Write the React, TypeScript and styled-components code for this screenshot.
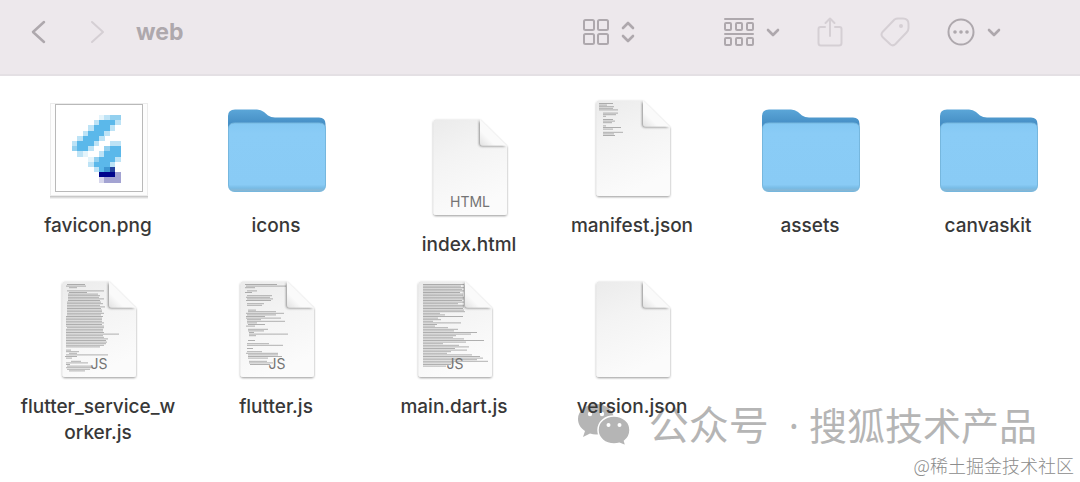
import React from "react";
import styled, { createGlobalStyle } from "styled-components";

const GlobalStyle = createGlobalStyle`
  *, *::before, *::after { box-sizing: border-box; }
  body {
    margin: 0;
    background: #ffffff;
    font-family: Inter, "Noto Sans CJK SC", sans-serif;
  }
`;

const Window = styled.div`
  position: relative;
  min-height: 100vh;
`;

const Toolbar = styled.header`
  display: flex;
  align-items: center;
  justify-content: space-between;
  height: 76px;
  padding: 0 79px 10px 30px;
  background: #ede8ec;
  border-bottom: 2px solid #e4e0e4;
`;

const Navigation = styled.nav`
  display: flex;
  align-items: center;
  gap: 44px;
`;

const Title = styled.h1`
  margin: 0 0 0 -14px;
  font-size: 23px;
  line-height: 28px;
  font-weight: 700;
  color: #aea8ad;
`;

const Tools = styled.div`
  display: flex;
  align-items: center;
  gap: 37px;
`;

const ToolButton = styled.button<{ $faint?: boolean; $apart?: boolean }>`
  display: flex;
  align-items: center;
  gap: 12px;
  margin: 0 ${(p) => (p.$apart ? "52px" : "0")} 0 0;
  padding: 0;
  border: 0;
  background: none;
  color: ${(p) => (p.$faint ? "#d5cfd4" : "#aea8ad")};
  cursor: pointer;
`;

const Glyph = styled.svg`
  display: block;
  fill: none;
  stroke: currentColor;
  stroke-width: 2;
  stroke-linecap: round;
  stroke-linejoin: round;
`;

const FileGrid = styled.ul`
  position: relative;
  z-index: 1;
  display: grid;
  grid-template-columns: repeat(6, minmax(0, 1fr));
  grid-auto-rows: 181px;
  margin: 0;
  padding: 24px 3px 0 9px;
  list-style: none;
`;

const FileItem = styled.li<{ $shifted?: boolean }>`
  display: flex;
  justify-content: center;
  align-items: flex-start;
  padding: ${(p) => (p.$shifted ? "19px 0 0 30px" : "0")};
`;

const FileButton = styled.button`
  display: flex;
  flex-shrink: 0;
  flex-direction: column;
  align-items: center;
  gap: 15px;
  width: 160px;
  padding: 0;
  border: 0;
  background: none;
  font: inherit;
  cursor: pointer;
`;

const FileName = styled.span`
  max-width: 100%;
  font-size: 19px;
  font-weight: 500;
  line-height: 26px;
  color: #383838;
  word-break: break-all;
`;

const Art = styled.svg`
  display: block;
  width: 100px;
  height: 98px;
  overflow: visible;
`;

const AccountMark = styled.div`
  position: absolute;
  right: 43px;
  bottom: 33px;
  display: flex;
  align-items: center;
  font-family: "Noto Sans", "Noto Sans CJK SC", sans-serif;
  font-size: 38px;
  line-height: 48px;
  color: #b5b5b5;
`;

const AccountKind = styled.span`
  padding-left: 18px;
  font-size: 40px;
`;

const AccountDot = styled.span`
  padding: 0 10px 0 20px;
`;

const CommunityMark = styled.div`
  position: absolute;
  right: 6px;
  bottom: 5px;
  font-family: "Noto Sans CJK SC", sans-serif;
  font-weight: 300;
  font-size: 18px;
  line-height: 24px;
  color: #8c8c8c;
`;

const ChevronDown = () => (
  <Glyph width="14" height="14" viewBox="0 0 14 14">
    <path d="M2 5l5 5 5-5" strokeWidth="2.6" />
  </Glyph>
);

const LOGO_ROWS = [
  "................",
  "................",
  "........abcc....",
  ".......bdddb....",
  "......bdddb.....",
  ".....bdddb......",
  "....bdddb.......",
  "...bdddb..bbb...",
  "...cddb..cddc...",
  "....ba..bdddb...",
  "......acdddb....",
  "......bdddb.....",
  ".......bdem.....",
  "........nnnp....",
  "........qppp....",
].map((row) => row.slice(0, 12) + "....");

const SHADES: Record<string, string> = {
  a: "#e4f4fb",
  b: "#bde3f6",
  c: "#93d0ef",
  d: "#5bb8ea",
  e: "#3f97d2",
  n: "#00048c",
  m: "#27449f",
  p: "#a3a3d2",
  q: "#d6d6ec",
};

const Picture = () => (
  <Art viewBox="0 0 100 98" aria-hidden="true">
    <rect x="2" y="5" width="98" height="94" fill="#000" opacity=".06" />
    <rect x="2" y="4" width="98" height="93.500" fill="#c9c9c9" />
    <rect x="2.500" y="3.500" width="97" height="92" fill="#fdfdfd" stroke="#ececec" />
    <rect x="7.500" y="4.500" width="87" height="87" fill="#fff" stroke="#b9b9b9" />
    <g shapeRendering="crispEdges">
      {LOGO_ROWS.flatMap((row, y) =>
        row.split("").map((key, x) =>
          key === "." ? null : (
            <rect
              key={`${x}-${y}`}
              x={7.5 + x * 5.44}
              y={4.5 + y * 5.2}
              width="5.5"
              height="5.3"
              fill={SHADES[key]}
            />
          )
        )
      )}
    </g>
  </Art>
);

const Folder = () => (
  <Art viewBox="0 0 100 98" aria-hidden="true">
    <defs>
      <linearGradient id="folderBack" x1="0" y1="0" x2="0" y2="1">
        <stop offset="0" stopColor="#5ba6d8" />
        <stop offset=".18" stopColor="#4790c6" />
      </linearGradient>
      <linearGradient id="folderFront" x1="0" y1="0" x2="0" y2="1">
        <stop offset="0" stopColor="#83c8f3" />
        <stop offset=".15" stopColor="#8accf6" />
        <stop offset=".9" stopColor="#89cbf5" />
        <stop offset=".95" stopColor="#78bbe5" />
        <stop offset="1" stopColor="#8db5cd" />
      </linearGradient>
    </defs>
    <path
      d="M2 16Q2 9.500 9 9.500H31Q35 9.500 38 12L42 15.500Q45 17.500 49 17.500H93Q99.500 17.500 99.500 24V84H2Z"
      fill="url(#folderBack)"
    />
    <path
      d="M2.500 29Q2.500 23 8.500 23H93.500Q99.500 23 99.500 29V85Q99.500 91.500 93 91.500H9Q2.500 91.500 2.500 85Z"
      fill="url(#folderFront)"
      stroke="#76b7de"
    />
  </Art>
);

type Line = [x: number, width: number];

const line = (text: string): Line[] =>
  text.split(" ").map((pair) => pair.split(":").map(Number) as Line);

const MANIFEST = line("3:14 3:8 3:15 3:14 3:19 0:0 7:15 7:13 7:3 0:0 7:10 7:12 7:9 0:0 7:3 7:18 7:10 0:0 7:20 7:11 7:12");
const WORKER = line(
  "5:18 4:20 7:8 0:0 5:37 7:18 6:30 6:32 6:31 6:36 6:32 5:34 5:36 5:33 5:38 5:34 5:35 5:35 5:37 5:34 4:37 4:36 4:36 4:36 4:38 4:36 4:38 5:37 4:37 4:37 4:38 4:53 4:37 4:38 4:42 4:40 4:41 4:40 4:38 4:34 0:0 4:5 4:13 7:8 4:42 3:12 4:6 0:0 9:10 4:22 4:4 5:24 4:27 5:23 7:16"
);
const FLUTTER = line(
  "5:32 6:40 5:10 0:0 7:10 5:7 0:0 7:25 6:24 7:26 6:25 0:0 7:17 7:15 0:0 0:0 8:8 8:28 6:38 7:29 6:19 6:35 7:14 7:38 7:10 8:17 6:9 0:0 8:20 8:16 9:5 9:39 9:7 0:0 0:0 8:7 0:0 7:22 7:36 0:0 7:6 0:0 7:15 6:32 8:30 8:34 8:20 0:0 9:18 9:24 10:20"
);
const MAIN = line(
  "5:42 5:38 5:41 5:39 5:42 5:37 5:40 5:40 5:42 5:41 5:39 5:42 5:35 5:42 5:44 5:40 5:64 5:42 5:17 5:22 5:40 5:15 5:18 5:10 5:38 5:14 5:12 5:25 5:35 5:31 5:54 5:48 5:33 5:30 5:41 5:61 5:43 5:20 5:36 5:46 5:32 5:44 5:28 5:24 5:49 5:57 5:60 5:54 5:65 5:31 5:28 5:23"
);

interface DocProps {
  kind?: string;
  code?: Line[];
}

const Document = ({ kind, code = [] }: DocProps) => (
  <Art viewBox="0 0 100 98" aria-hidden="true">
    <defs>
      <linearGradient id="paper" x1="0" y1="0" x2=".35" y2="1">
        <stop offset="0" stopColor="#ebebeb" />
        <stop offset=".4" stopColor="#f3f3f3" />
        <stop offset="1" stopColor="#fbfbfb" />
      </linearGradient>
      <linearGradient id="fold" x1="0" y1="1" x2=".6" y2=".4">
        <stop offset="0" stopColor="#e2e2e2" />
        <stop offset=".5" stopColor="#fafafa" />
      </linearGradient>
      <filter id="paperShade" x="-10%" y="-10%" width="120%" height="120%">
        <feDropShadow dx="0" dy="1" stdDeviation="1" floodOpacity=".4" />
      </filter>
      <filter id="foldShade" x="-30%" y="-30%" width="160%" height="160%">
        <feDropShadow dx="-1" dy="1" stdDeviation="1.2" floodOpacity=".4" />
      </filter>
    </defs>
    <path
      d="M17 .5H61L88 27V93.500Q88 96 85.500 96H17Q14.500 96 14.500 93.500V3Q14.500 .5 17 .5Z"
      fill="url(#paper)"
      filter="url(#paperShade)"
    />
    <g fill="#808080" opacity=".6">
      {code.map(([x, width], i) => (
        <rect
          key={i}
          x={14 + x}
          y={3 + i * 1.6}
          width={i < 17 ? Math.min(width, 46 - x) : width}
          height="1"
        />
      ))}
    </g>
    <path
      d="M61 .5V23.500Q61 26.500 64 26.500H87.500Z"
      fill="url(#fold)"
      filter="url(#foldShade)"
    />
    {kind && (
      <text
        x="51"
        y="88"
        textAnchor="middle"
        fontFamily="Inter, sans-serif"
        fontSize="14"
        fill="#747474"
      >
        {kind}
      </text>
    )}
  </Art>
);

interface FileEntry {
  name: string;
  art: React.ReactNode;
  shifted?: boolean;
}

const FILES: FileEntry[] = [
  { name: "favicon.png", art: <Picture /> },
  { name: "icons", art: <Folder /> },
  { name: "index.html", art: <Document kind="HTML" />, shifted: true },
  { name: "manifest.json", art: <Document code={MANIFEST} /> },
  { name: "assets", art: <Folder /> },
  { name: "canvaskit", art: <Folder /> },
  { name: "flutter_service_worker.js", art: <Document kind="JS" code={WORKER} /> },
  { name: "flutter.js", art: <Document kind="JS" code={FLUTTER} /> },
  { name: "main.dart.js", art: <Document kind="JS" code={MAIN} /> },
  { name: "version.json", art: <Document /> },
];

const ChatLogo = () => (
  <svg width="54" height="44" viewBox="0 0 54 44" aria-hidden="true">
    <path
      d="M19 1C8.500 1 1 8 1 16c0 5 2.500 9 7 12l-2 6 7-3.500c2 .6 4 .9 6 .9 10 0 18-6.500 18-15.200S29 1 19 1Z"
      fill="#b5b5b5"
    />
    <circle cx="13" cy="11" r="2.200" fill="#fff" />
    <circle cx="25" cy="11" r="2.200" fill="#fff" />
    <path
      d="M37 13C28 13 21 19 21 27s7 14 16 14c2 0 4-.3 5.500-.8L49 43l-1.500-5c3.500-2.600 5.500-6.500 5.500-11 0-8-7-14-16-14Z"
      fill="#b5b5b5"
      stroke="#fff"
      strokeWidth="1.500"
    />
    <circle cx="31.500" cy="22" r="2" fill="#fff" />
    <circle cx="42.500" cy="22" r="2" fill="#fff" />
  </svg>
);

const GROUP_COLUMNS = [1, 12, 23];

export default function App() {
  return (
    <Window>
      <GlobalStyle />
      <Toolbar>
        <Navigation aria-label="History">
          <ToolButton aria-label="Back">
            <Glyph width="16" height="24" viewBox="0 0 16 24">
              <path d="M14 2L3 12l11 10" strokeWidth="2.500" />
            </Glyph>
          </ToolButton>
          <ToolButton aria-label="Forward" $faint>
            <Glyph width="16" height="24" viewBox="0 0 16 24">
              <path d="M2 2l11 10L2 22" />
            </Glyph>
          </ToolButton>
          <Title>web</Title>
        </Navigation>
        <Tools>
          <ToolButton aria-label="Icon view" $apart>
            <Glyph width="26" height="26" viewBox="0 0 26 26">
              <rect x="1" y="1" width="10" height="10" rx="1.500" />
              <rect x="15" y="1" width="10" height="10" rx="1.500" />
              <rect x="1" y="15" width="10" height="10" rx="1.500" />
              <rect x="15" y="15" width="10" height="10" rx="1.500" />
            </Glyph>
            <Glyph width="14" height="24" viewBox="0 0 14 24">
              <path d="M2 8l5-5 5 5M2 16l5 5 5-5" strokeWidth="2.600" />
            </Glyph>
          </ToolButton>
          <ToolButton aria-label="Group items">
            <Glyph width="30" height="30" viewBox="0 0 30 30">
              <path d="M1 2h28M1 17h28" />
              {GROUP_COLUMNS.map((x) => (
                <React.Fragment key={x}>
                  <rect x={x} y="6" width="6" height="7" rx="1" />
                  <rect x={x} y="21" width="6" height="7" rx="1" />
                </React.Fragment>
              ))}
            </Glyph>
            <ChevronDown />
          </ToolButton>
          <ToolButton aria-label="Share" $faint>
            <Glyph width="26" height="30" viewBox="0 0 26 30">
              <path d="M8 10H3.500Q1.500 10 1.500 12V26Q1.500 28.500 4 28.500H22Q24.500 28.500 24.500 26V12Q24.500 10 22.500 10H18M13 19V2M8.500 6L13 1.500 17.500 6" />
            </Glyph>
          </ToolButton>
          <ToolButton aria-label="Edit tags" $faint>
            <Glyph width="30" height="30" viewBox="0 0 30 30">
              <path d="M14.500 2.500Q16 1.500 18 1.500H23Q28.500 1.500 28.500 7V11Q28.500 13.500 26.500 15.500L15.500 27Q13 29.500 10.500 27.500L2.500 20Q.5 17.500 2.500 15Z" />
              <circle cx="21" cy="9" r="1" />
            </Glyph>
          </ToolButton>
          <ToolButton aria-label="More actions">
            <Glyph width="28" height="28" viewBox="0 0 28 28">
              <circle cx="14" cy="14" r="12.500" />
              <g fill="currentColor" stroke="none">
                <circle cx="8" cy="14" r="1.800" />
                <circle cx="14" cy="14" r="1.800" />
                <circle cx="20" cy="14" r="1.800" />
              </g>
            </Glyph>
            <ChevronDown />
          </ToolButton>
        </Tools>
      </Toolbar>
      <main>
        <FileGrid aria-label="Files">
          {FILES.map((file) => (
            <FileItem key={file.name} $shifted={file.shifted}>
              <FileButton>
                {file.art}
                <FileName>{file.name}</FileName>
              </FileButton>
            </FileItem>
          ))}
        </FileGrid>
      </main>
      <AccountMark>
        <ChatLogo />
        <AccountKind>公众号</AccountKind>
        <AccountDot>·</AccountDot>
        <span>搜狐技术产品</span>
      </AccountMark>
      <CommunityMark>@稀土掘金技术社区</CommunityMark>
    </Window>
  );
}
